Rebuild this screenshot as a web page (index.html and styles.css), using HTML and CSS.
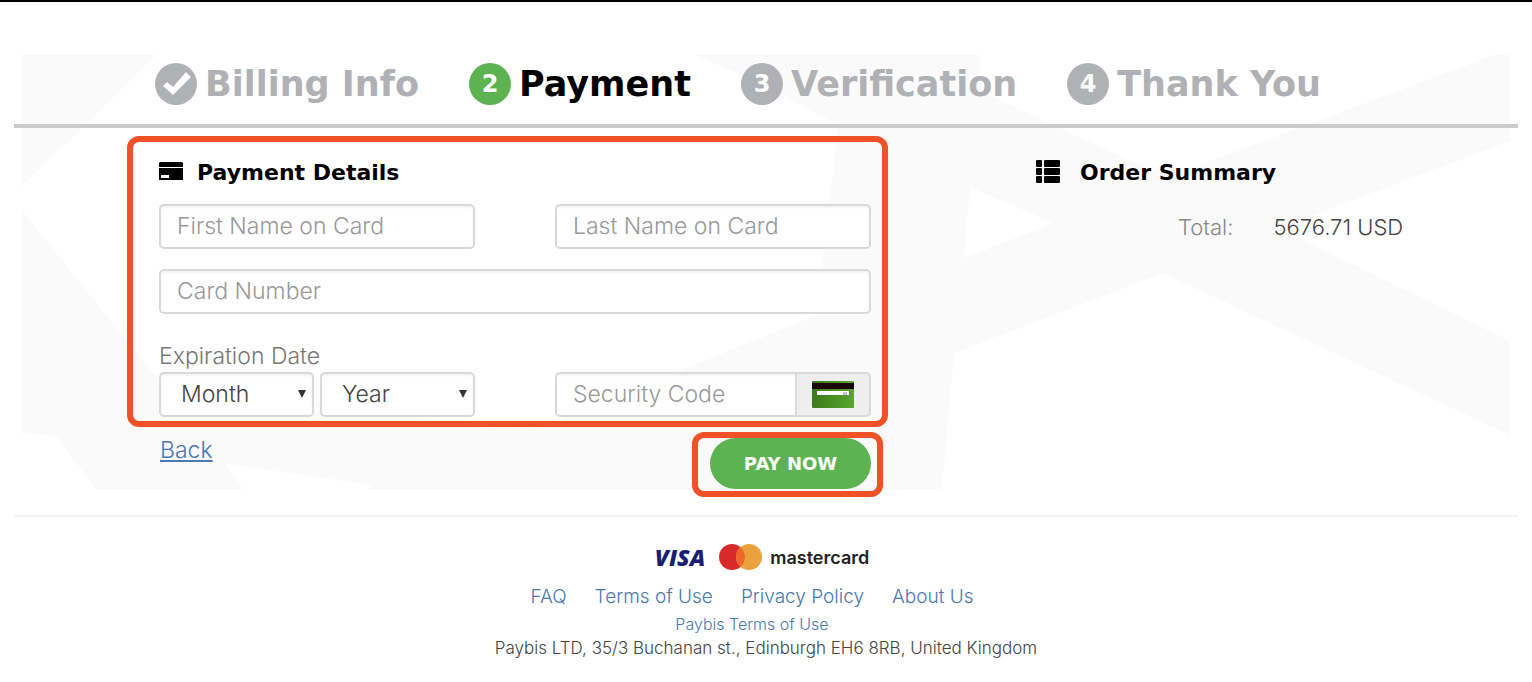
FILE: index.html
```html
<!DOCTYPE html>
<html lang="en">
<head>
    <meta charset="UTF-8">
    <meta name="viewport" content="width=device-width, initial-scale=1.0">
    <title>Payment</title>
    <link rel="stylesheet" href="styles.css">
</head>
<body>
    <main class="checkout">
        <!-- Pale geometric backdrop -->
        <svg class="backdrop" viewBox="0 0 1488 434" preserveAspectRatio="none" aria-hidden="true">
            <path d="M0 0H134L0 131Z"/>
            <path fill-rule="evenodd" d="M673 0H959L956 35L1106 105Q1145 124 1183 108L1472 0H1488V86L1286 162Q1256 172 1286 188L1488 286V380L1147 221Q1140 217 1133 221L932 298L920 434H346L350 430L204 409L221 434H73L40 388Q37 382 31 381L0 378V156L134 322L398 363L492 376L520 372L795 260L816 70L744 30ZM948 132L942 203L1032 168Z"/>
        </svg>

        <ol class="steps">
            <li class="step">
                <span class="step-mark">
                    <svg width="42" height="42" viewBox="0 0 42 42" aria-hidden="true"><path d="M8 23l4-4 6 5L31 9l5 5-18 18z" fill="#fff"/></svg>
                </span>
                Billing Info
            </li>
            <li class="step active"><span class="step-mark">2</span>Payment</li>
            <li class="step"><span class="step-mark">3</span>Verification</li>
            <li class="step"><span class="step-mark">4</span>Thank You</li>
        </ol>

        <div class="columns">
            <form class="payment" id="paymentForm">
                <section class="details">
                    <h2>
                        <svg class="heading-icon" width="24" height="20" viewBox="0 0 24 20" aria-hidden="true">
                            <path d="M1 0h22l1 1v4H0V1zM0 6h24v12H0zM2 13v3h8v-3z" fill-rule="evenodd"/>
                        </svg>
                        Payment Details
                    </h2>
                    <div class="fields">
                        <input class="field" type="text" placeholder="First Name on Card" aria-label="First Name on Card">
                        <input class="field" type="text" placeholder="Last Name on Card" aria-label="Last Name on Card">
                        <input class="field wide" type="text" placeholder="Card Number" aria-label="Card Number">
                        <div class="expiration">
                            <label for="month">Expiration Date</label>
                            <div class="dates">
                                <span class="select-wrap"><select class="field" id="month"><option>Month</option></select></span>
                                <span class="select-wrap"><select class="field" id="year" aria-label="Year"><option>Year</option></select></span>
                            </div>
                        </div>
                        <div class="security">
                            <input class="field" type="text" placeholder="Security Code" aria-label="Security Code">
                            <span class="addon">
                                <svg width="42" height="27" viewBox="0 0 42 27" aria-hidden="true">
                                    <defs>
                                        <linearGradient id="cardGreen" x1="0" y1="0" x2="1" y2="0">
                                            <stop offset="0" stop-color="#3c7a1c"/>
                                            <stop offset="1" stop-color="#5aa531"/>
                                        </linearGradient>
                                    </defs>
                                    <rect width="42" height="27" rx="1" fill="url(#cardGreen)"/>
                                    <path d="M0 2h42v6H0z" fill="#1a0508"/>
                                    <path d="M5 10h32v4H5z" fill="#fff"/>
                                    <path d="M31 11h4v3h-4z" fill="#cbb9d8"/>
                                </svg>
                            </span>
                        </div>
                    </div>
                </section>
                <div class="actions">
                    <a class="back" href="#">Back</a>
                    <div class="pay-frame"><button class="pay" type="submit">PAY NOW</button></div>
                </div>
            </form>

            <section class="summary">
                <h2>
                    <svg class="heading-icon" width="24" height="24" viewBox="0 0 24 24" aria-hidden="true">
                        <rect y="0" width="6" height="7" rx="1"/><rect x="8" y="0" width="16" height="7" rx="1"/>
                        <rect y="8" width="6" height="7" rx="1"/><rect x="8" y="8" width="16" height="7" rx="1"/>
                        <rect y="16" width="6" height="7" rx="1"/><rect x="8" y="16" width="16" height="7" rx="1"/>
                    </svg>
                    Order Summary
                </h2>
                <p class="total"><span class="total-label">Total:</span><span>5676.71 USD</span></p>
            </section>
        </div>
    </main>

    <footer class="footer">
        <div class="brands">
            <span class="visa">VISA</span>
            <svg width="43" height="28" viewBox="0 0 43 28" aria-hidden="true">
                <circle cx="13" cy="14" r="13" fill="#d9292b"/>
                <circle cx="30" cy="14" r="13" fill="#eaa13e"/>
                <path d="M21.500 4.200a13 13 0 0 1 0 19.600a13 13 0 0 1 0-19.600z" fill="#ee672d"/>
            </svg>
            <span class="mastercard">mastercard</span>
        </div>
        <nav class="links">
            <a href="#">FAQ</a>
            <a href="#">Terms of Use</a>
            <a href="#">Privacy Policy</a>
            <a href="#">About Us</a>
        </nav>
        <a class="terms" href="#">Paybis Terms of Use</a>
        <p class="address">Paybis LTD, 35/3 Buchanan st., Edinburgh EH6 8RB, United Kingdom</p>
    </footer>

    <script>
        document.getElementById("paymentForm").addEventListener("submit", function(event) {
            event.preventDefault();
        });
    </script>
</body>
</html>
```

FILE: styles.css
```css
* {
    box-sizing: border-box;
}
body {
    margin: 0;
    border-top: 2px solid #000;
    background-color: #fff;
    color: #444;
    font-family: Inter, "Open Sans", sans-serif;
    font-size: 22px;
    font-weight: 300;
}
a {
    color: #4a78b0;
    text-decoration: none;
}
.checkout {
    position: relative;
    margin: 53px 14px 0;
}
.backdrop {
    position: absolute;
    top: 0;
    left: 8px;
    z-index: -1;
    width: calc(100% - 16px);
    height: calc(100% - 8px);
    fill: #fafafa;
}

/* Progress steps */
.steps {
    display: flex;
    gap: 50px;
    height: 73px;
    margin: 0;
    padding: 0 0 0 141px;
    border-bottom: 4px solid #cbcbcb;
    list-style: none;
}
.step {
    display: flex;
    align-items: center;
    gap: 8px;
    height: 58px;
    color: #b0b1b5;
    font-family: "DejaVu Sans", sans-serif;
    font-size: 35px;
    font-weight: 700;
    white-space: nowrap;
}
.step.active {
    color: #000;
}
.step-mark {
    display: flex;
    align-items: center;
    justify-content: center;
    width: 42px;
    height: 42px;
    border-radius: 50%;
    background-color: #b0b1b5;
    color: #fff;
    font-size: 24px;
}
.active .step-mark {
    background-color: #5db351;
}

/* Form and summary */
.columns {
    display: grid;
    grid-template-columns: 761fr 482fr;
    column-gap: 148px;
    padding: 8px 0 0 113px;
}
.details {
    padding: 16px 11px 4px 26px;
    border: 6px solid #f05126;
    border-radius: 12px;
}
h2 {
    display: flex;
    align-items: center;
    height: 28px;
    margin: 0;
    color: #000;
    font-family: "DejaVu Sans", sans-serif;
    font-size: 22px;
    font-weight: 700;
}
.heading-icon {
    margin-right: 14px;
    fill: #000;
}
.fields {
    display: grid;
    grid-template-columns: 1fr 1fr;
    gap: 20px 80px;
    padding-top: 18px;
    font-size: 23px;
}
.field {
    width: 100%;
    height: 45px;
    padding: 0 16px 2px;
    border: 2px solid #d9d9d9;
    border-radius: 5px;
    background-color: #fff;
    box-shadow: inset 0 2px 2px rgba(0, 0, 0, 0.05);
    color: #444;
    font: inherit;
}
.field::placeholder {
    color: #999;
}
.wide {
    grid-column: 1 / 3;
}
.expiration {
    padding-top: 8px;
    color: #777;
}
.expiration label {
    display: block;
    height: 30px;
    line-height: 28px;
}
.dates {
    display: grid;
    grid-template-columns: 1fr 1fr;
    gap: 6px;
}
.select-wrap {
    position: relative;
}
select.field {
    display: block;
    padding: 0 20px 2px;
    appearance: none;
}
.select-wrap::after {
    position: absolute;
    top: 18px;
    right: 8px;
    border: 4px solid transparent;
    border-top: 8px solid #333;
    border-bottom: 0;
    content: "";
    pointer-events: none;
}
.security {
    display: flex;
    align-self: end;
}
.security .field {
    flex: 1;
    min-width: 0;
    border-radius: 5px 0 0 5px;
}
.addon {
    display: flex;
    align-items: center;
    justify-content: center;
    width: 74px;
    border: 2px solid #d9d9d9;
    border-left: 0;
    border-radius: 0 5px 5px 0;
    background-color: #eee;
}
.actions {
    display: flex;
    justify-content: space-between;
    padding: 5px 5px 0 33px;
}
.back {
    padding-top: 4px;
    font-size: 23px;
    text-decoration: underline;
}
.pay-frame {
    padding: 0 6px 2px 12px;
    border: 6px solid #f05126;
    border-radius: 12px;
}
.pay {
    display: block;
    width: 161px;
    height: 51px;
    border: none;
    border-radius: 26px;
    background-color: #5db351;
    color: #fff;
    font-family: "DejaVu Sans", sans-serif;
    font-size: 18px;
    font-weight: 700;
    cursor: pointer;
}
.summary {
    padding-top: 22px;
}
.summary .heading-icon {
    margin-right: 20px;
}
.total {
    display: flex;
    gap: 40px;
    margin: 28px 0 0 142px;
    line-height: 26px;
}
.total-label {
    color: #888;
}

/* Footer */
.footer {
    display: flex;
    flex-direction: column;
    align-items: center;
    margin: 18px 14px 0;
    padding-top: 26px;
    border-top: 2px solid #f2f2f2;
}
.brands {
    display: flex;
    align-items: center;
    height: 28px;
    padding-right: 8px;
}
.visa {
    margin-right: 14px;
    color: #1a1f71;
    font-family: "Open Sans", sans-serif;
    font-size: 23px;
    font-style: italic;
    font-weight: 800;
}
.mastercard {
    margin-left: 8px;
    color: #222;
    font-size: 18px;
    font-weight: 600;
}
.links {
    display: flex;
    margin-top: 12px;
    font-size: 19px;
    line-height: 28px;
}
.links a {
    margin-right: 28px;
}
.terms {
    margin-right: 28px;
    font-size: 16px;
    line-height: 26px;
}
.address {
    margin: 0;
    font-size: 17px;
    line-height: 22px;
}
```
